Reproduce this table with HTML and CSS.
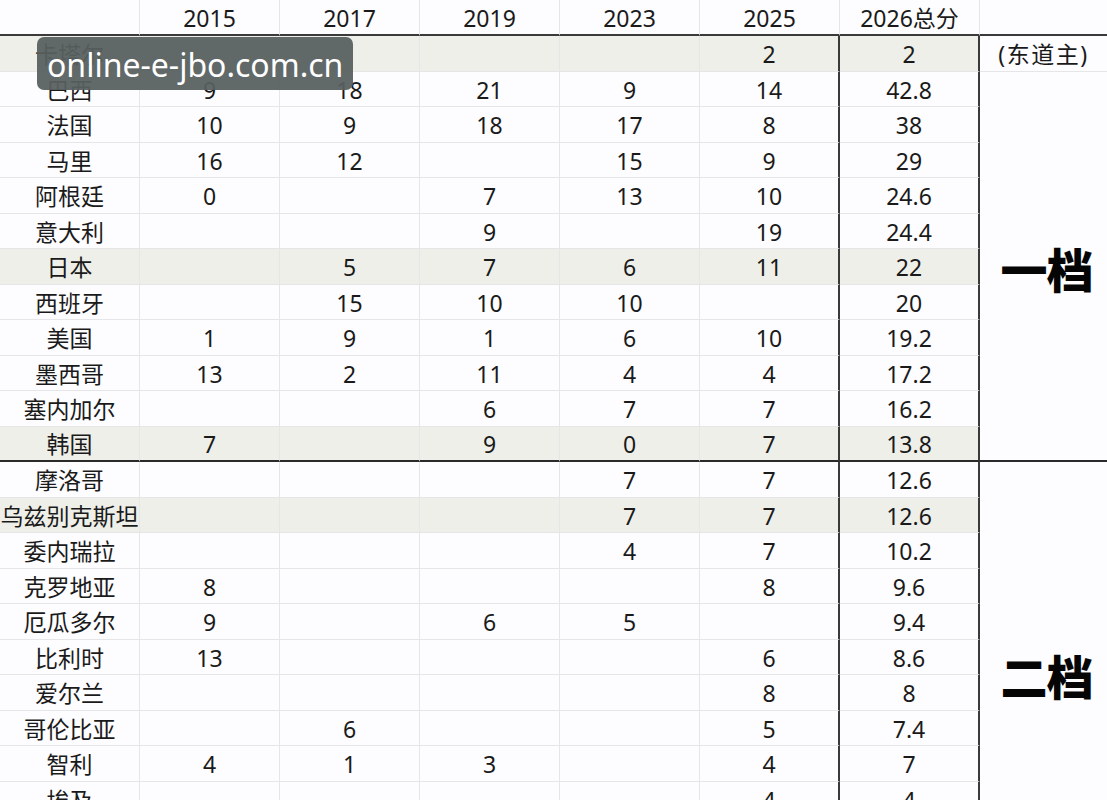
FILE: index.html
```html
<!DOCTYPE html>
<html lang="zh">
<head>
<meta charset="utf-8">
<title>2026 积分表</title>
<link rel="stylesheet" href="styles.css">
</head>
<body>
<div class="sheet">
  <div class="grid">
    <div class="c hd"></div><div class="c hd">2015</div><div class="c hd">2017</div><div class="c hd">2019</div><div class="c hd">2023</div><div class="c hd">2025</div><div class="c hd">2026总分</div><div class="c hd last"></div>

    <div class="c hl">卡塔尔</div><div class="c hl"></div><div class="c hl"></div><div class="c hl"></div><div class="c hl"></div><div class="c hl sep">2</div><div class="c hl sep">2</div><div class="host">(东道主)</div>

    <div class="tier t1">一档</div>
    <div class="tier t2">二档</div>

    <div class="c">巴西</div><div class="c">9</div><div class="c">18</div><div class="c">21</div><div class="c">9</div><div class="c sep">14</div><div class="c sep">42.8</div>
    <div class="c">法国</div><div class="c">10</div><div class="c">9</div><div class="c">18</div><div class="c">17</div><div class="c sep">8</div><div class="c sep">38</div>
    <div class="c">马里</div><div class="c">16</div><div class="c">12</div><div class="c"></div><div class="c">15</div><div class="c sep">9</div><div class="c sep">29</div>
    <div class="c">阿根廷</div><div class="c">0</div><div class="c"></div><div class="c">7</div><div class="c">13</div><div class="c sep">10</div><div class="c sep">24.6</div>
    <div class="c">意大利</div><div class="c"></div><div class="c"></div><div class="c">9</div><div class="c"></div><div class="c sep">19</div><div class="c sep">24.4</div>
    <div class="c hl">日本</div><div class="c hl"></div><div class="c hl">5</div><div class="c hl">7</div><div class="c hl">6</div><div class="c hl sep">11</div><div class="c hl sep">22</div>
    <div class="c">西班牙</div><div class="c"></div><div class="c">15</div><div class="c">10</div><div class="c">10</div><div class="c sep"></div><div class="c sep">20</div>
    <div class="c">美国</div><div class="c">1</div><div class="c">9</div><div class="c">1</div><div class="c">6</div><div class="c sep">10</div><div class="c sep">19.2</div>
    <div class="c">墨西哥</div><div class="c">13</div><div class="c">2</div><div class="c">11</div><div class="c">4</div><div class="c sep">4</div><div class="c sep">17.2</div>
    <div class="c">塞内加尔</div><div class="c"></div><div class="c"></div><div class="c">6</div><div class="c">7</div><div class="c sep">7</div><div class="c sep">16.2</div>
    <div class="c hl end">韩国</div><div class="c hl end">7</div><div class="c hl end"></div><div class="c hl end">9</div><div class="c hl end">0</div><div class="c hl sep end">7</div><div class="c hl sep end">13.8</div>

    <div class="c">摩洛哥</div><div class="c"></div><div class="c"></div><div class="c"></div><div class="c">7</div><div class="c sep">7</div><div class="c sep">12.6</div>
    <div class="c hl">乌兹别克斯坦</div><div class="c hl"></div><div class="c hl"></div><div class="c hl"></div><div class="c hl">7</div><div class="c hl sep">7</div><div class="c hl sep">12.6</div>
    <div class="c">委内瑞拉</div><div class="c"></div><div class="c"></div><div class="c"></div><div class="c">4</div><div class="c sep">7</div><div class="c sep">10.2</div>
    <div class="c">克罗地亚</div><div class="c">8</div><div class="c"></div><div class="c"></div><div class="c"></div><div class="c sep">8</div><div class="c sep">9.6</div>
    <div class="c">厄瓜多尔</div><div class="c">9</div><div class="c"></div><div class="c">6</div><div class="c">5</div><div class="c sep"></div><div class="c sep">9.4</div>
    <div class="c">比利时</div><div class="c">13</div><div class="c"></div><div class="c"></div><div class="c"></div><div class="c sep">6</div><div class="c sep">8.6</div>
    <div class="c">爱尔兰</div><div class="c"></div><div class="c"></div><div class="c"></div><div class="c"></div><div class="c sep">8</div><div class="c sep">8</div>
    <div class="c">哥伦比亚</div><div class="c"></div><div class="c">6</div><div class="c"></div><div class="c"></div><div class="c sep">5</div><div class="c sep">7.4</div>
    <div class="c">智利</div><div class="c">4</div><div class="c">1</div><div class="c">3</div><div class="c"></div><div class="c sep">4</div><div class="c sep">7</div>
    <div class="c">埃及</div><div class="c"></div><div class="c"></div><div class="c"></div><div class="c"></div><div class="c sep">4</div><div class="c sep">4</div>
    <div class="c"></div><div class="c"></div><div class="c"></div><div class="c"></div><div class="c"></div><div class="c sep"></div><div class="c sep"></div>
    <div class="c"></div><div class="c"></div><div class="c"></div><div class="c"></div><div class="c"></div><div class="c sep"></div><div class="c sep"></div>
  </div>
  <div class="watermark">online-e-jbo.com.cn</div>
</div>
</body>
</html>
```

FILE: styles.css
```css
html, body {
  margin: 0;
  padding: 0;
  background: #fdfcfe;
}

.sheet {
  position: relative;
  width: 1107px;
  height: 800px;
  overflow: hidden;
  background: #fdfcfe;
  font-family: "Noto Sans", "Noto Sans CJK SC", sans-serif;
  color: #1a1a1a;
}

.grid {
  display: grid;
  grid-template-columns: repeat(7, 140px) 127px;
  grid-template-rows: 36px;
  grid-auto-rows: 35.5px;
}

.c {
  box-sizing: border-box;
  display: flex;
  align-items: center;
  justify-content: center;
  padding-top: 3px;
  font-size: 23px;
  line-height: 1;
  white-space: nowrap;
  overflow: visible;
  border-right: 1px solid #e6e5e8;
  border-bottom: 1px solid #e6e5e8;
}

.hd {
  border-bottom: 2px solid #3a3a3a;
  padding-top: 2px;
}

.hd.last {
  border-right: none;
}

.hl {
  background: #efefe9;
}

.sep {
  border-right: 2px solid #3a3a3a;
}

.end {
  border-bottom: 2px solid #2a2a2a;
}

.host {
  box-sizing: border-box;
  display: flex;
  align-items: center;
  justify-content: center;
  padding-top: 3px;
  font-size: 23px;
  letter-spacing: 1.5px;
  line-height: 1;
  border-bottom: 1px solid #e6e5e8;
}

.tier {
  box-sizing: border-box;
  grid-column: 8;
  display: flex;
  align-items: center;
  justify-content: center;
  font-family: "Noto Sans CJK SC", sans-serif;
  font-weight: 900;
  font-size: 47px;
  color: #050505;
  letter-spacing: -1px;
  padding-left: 6px;
}

.t1 {
  grid-row: 3 / span 11;
  border-bottom: 2px solid #2a2a2a;
  padding-top: 4px;
}

.t2 {
  grid-row: 14 / span 12;
  padding-bottom: 2px;
}

.watermark {
  position: absolute;
  left: 37px;
  top: 37px;
  width: 316px;
  height: 53px;
  box-sizing: border-box;
  padding-left: 10px;
  border-radius: 7px;
  background: rgba(88, 96, 96, 0.94);
  color: #ffffff;
  font-family: "Noto Sans", sans-serif;
  font-size: 32px;
  line-height: 55px;
  white-space: nowrap;
}
```
